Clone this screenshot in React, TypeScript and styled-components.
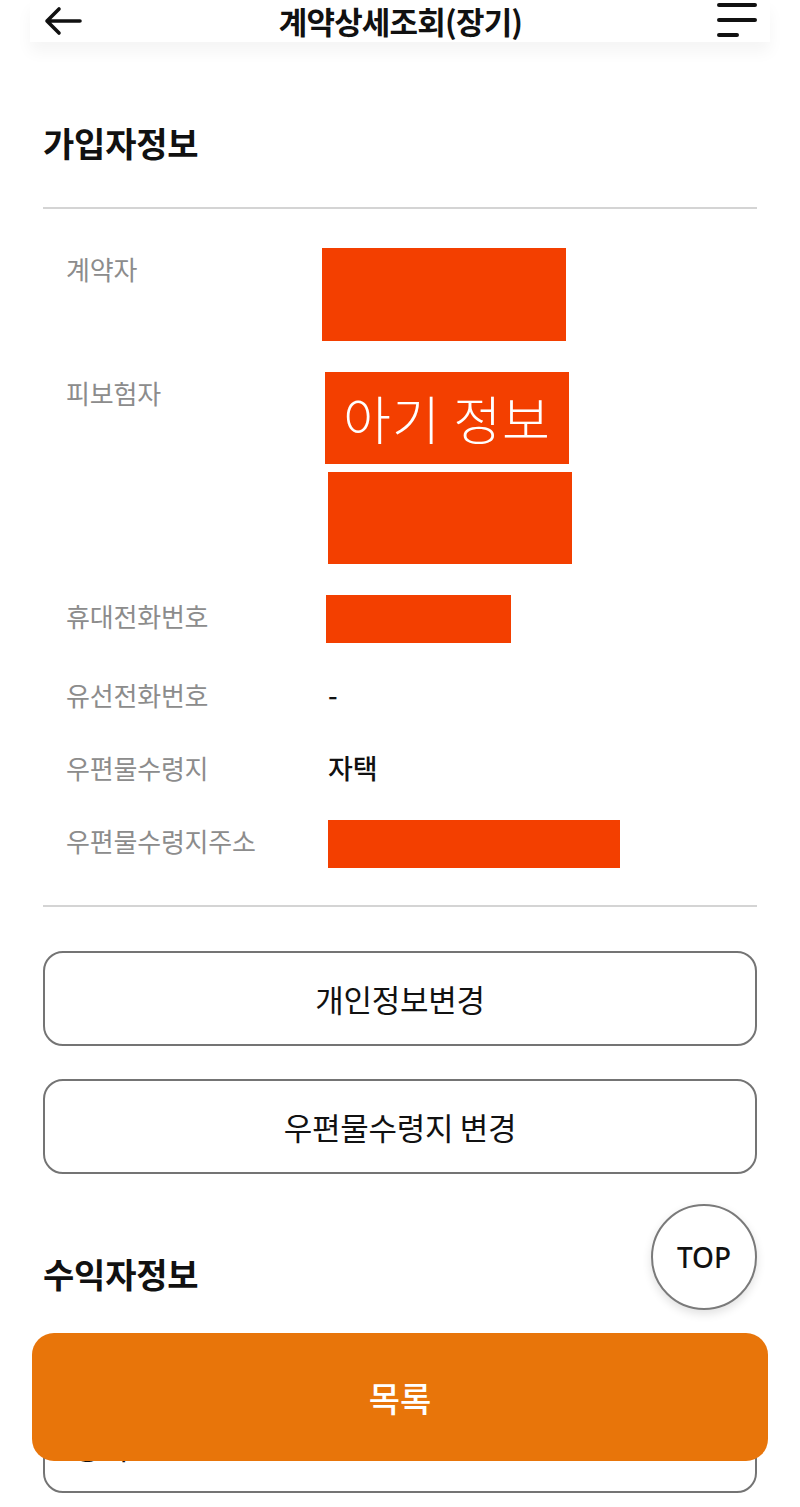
import React from "react";
import styled, { createGlobalStyle } from "styled-components";

const GlobalStyle = createGlobalStyle`
  body {
    margin: 0;
    background: #fff;
    font-family: "Noto Sans CJK KR", "Noto Sans", sans-serif;
    color: #111;
  }
`;

const Page = styled.div`
  position: relative;
  width: 800px;
  height: 1507px;
  overflow: hidden;
  background: #fff;
`;

const Header = styled.header`
  display: grid;
  grid-template-columns: 1fr auto 1fr;
  align-items: center;
  height: 42px;
  margin: 0 30px;
  padding: 0 13px 0 14px;
  background: #fff;
  box-shadow: 0 10px 16px rgba(0, 0, 0, 0.045);
`;

const IconButton = styled.button<{ $align?: "start" | "end" }>`
  justify-self: ${(p) => p.$align || "start"};
  display: flex;
  align-items: center;
  padding: 0;
  border: 0;
  background: none;
`;

const Title = styled.h1`
  margin: 0;
  font-size: 31px;
  font-weight: 700;
  letter-spacing: -0.8px;
  line-height: 42px;
`;

const Content = styled.main`
  padding: 0 43px;
`;

const SectionTitle = styled.h2<{ $top: number }>`
  margin: ${(p) => p.$top}px 0 0;
  font-size: 34px;
  font-weight: 700;
  letter-spacing: -0.2px;
  line-height: 46px;
`;

const Divider = styled.hr<{ $top: number }>`
  margin: ${(p) => p.$top}px 0 0;
  border: 0;
  height: 2px;
  background: #d4d4d4;
`;

const InfoList = styled.dl`
  display: flex;
  flex-direction: column;
  gap: 31px;
  margin: 39px 0 0;
  padding-left: 23px;
`;

const Row = styled.div`
  display: grid;
  grid-template-columns: 262px 1fr;
  align-items: start;
`;

const Label = styled.dt`
  font-size: 26px;
  line-height: 42px;
  color: #8c8c8c;
  letter-spacing: -0.2px;
`;

const Value = styled.dd`
  display: flex;
  flex-direction: column;
  gap: 8px;
  margin: 0;
  font-size: 27px;
  font-weight: 500;
  line-height: 42px;
  color: #111;
`;

const Redact = styled.div<{ $w: number; $h: number; $shift?: number }>`
  display: flex;
  align-items: center;
  justify-content: center;
  width: ${(p) => p.$w}px;
  height: ${(p) => p.$h}px;
  margin-left: ${(p) => p.$shift || 0}px;
  background: #f33f00;
  color: #fff;
  font-size: 52px;
  font-weight: 300;
  letter-spacing: 1px;
`;

const ButtonStack = styled.div<{ $top: number }>`
  display: flex;
  flex-direction: column;
  gap: 33px;
  margin-top: ${(p) => p.$top}px;
`;

const OutlineButton = styled.button<{ $align?: "center" | "flex-start" }>`
  display: flex;
  align-items: center;
  justify-content: ${(p) => p.$align || "center"};
  height: 95px;
  padding: 0 28px;
  border: 2px solid #747474;
  border-radius: 20px;
  background: #fff;
  font-family: inherit;
  font-size: 31px;
  color: #111;
  letter-spacing: -0.3px;
`;

const TopButton = styled.button`
  position: absolute;
  right: 43px;
  bottom: 197px;
  width: 106px;
  height: 106px;
  border: 2px solid #7a7a7a;
  border-radius: 50%;
  background: #fff;
  box-shadow: 0 4px 10px rgba(0, 0, 0, 0.12);
  font-family: "Noto Sans", sans-serif;
  font-size: 28px;
  font-weight: 500;
  color: #111;
`;

const ListButton = styled.button`
  position: absolute;
  left: 32px;
  right: 32px;
  bottom: 46px;
  height: 128px;
  border: 0;
  border-radius: 22px;
  background: #e8750a;
  font-family: inherit;
  font-size: 34px;
  font-weight: 500;
  color: #fff;
`;

const BackIcon = () => (
  <svg width="38" height="30" viewBox="0 0 38 30" fill="none">
    <path
      d="M15 3 L3 15 L15 27 M3 15 H36"
      stroke="#111"
      strokeWidth="3.6"
      strokeLinecap="round"
      strokeLinejoin="round"
    />
  </svg>
);

const MenuIcon = () => (
  <svg width="40" height="38" viewBox="0 0 40 38" fill="none">
    <path
      d="M2 3 H38 M2 18 H38 M2 33 H20"
      stroke="#111"
      strokeWidth="4"
      strokeLinecap="round"
    />
  </svg>
);

export default function App() {
  return (
    <Page>
      <GlobalStyle />
      <Header>
        <IconButton>
          <BackIcon />
        </IconButton>
        <Title>계약상세조회(장기)</Title>
        <IconButton $align="end">
          <MenuIcon />
        </IconButton>
      </Header>

      <Content>
        <SectionTitle $top={78}>가입자정보</SectionTitle>
        <Divider $top={41} />

        <InfoList>
          <Row>
            <Label>계약자</Label>
            <Value>
              <Redact $w={244} $h={93} $shift={-6} />
            </Value>
          </Row>
          <Row>
            <Label>피보험자</Label>
            <Value>
              <Redact $w={244} $h={92} $shift={-3}>
                아기 정보
              </Redact>
              <Redact $w={244} $h={92} />
            </Value>
          </Row>
          <Row>
            <Label>휴대전화번호</Label>
            <Value>
              <Redact $w={185} $h={48} $shift={-2} />
            </Value>
          </Row>
          <Row>
            <Label>유선전화번호</Label>
            <Value>-</Value>
          </Row>
          <Row>
            <Label>우편물수령지</Label>
            <Value>자택</Value>
          </Row>
          <Row>
            <Label>우편물수령지주소</Label>
            <Value>
              <Redact $w={292} $h={48} />
            </Value>
          </Row>
        </InfoList>

        <Divider $top={37} />

        <ButtonStack $top={44}>
          <OutlineButton>개인정보변경</OutlineButton>
          <OutlineButton>우편물수령지 변경</OutlineButton>
        </ButtonStack>

        <SectionTitle $top={77}>수익자정보</SectionTitle>

        <ButtonStack $top={101}>
          <OutlineButton $align="flex-start">상속인</OutlineButton>
        </ButtonStack>
      </Content>

      <TopButton>TOP</TopButton>
      <ListButton>목록</ListButton>
    </Page>
  );
}
